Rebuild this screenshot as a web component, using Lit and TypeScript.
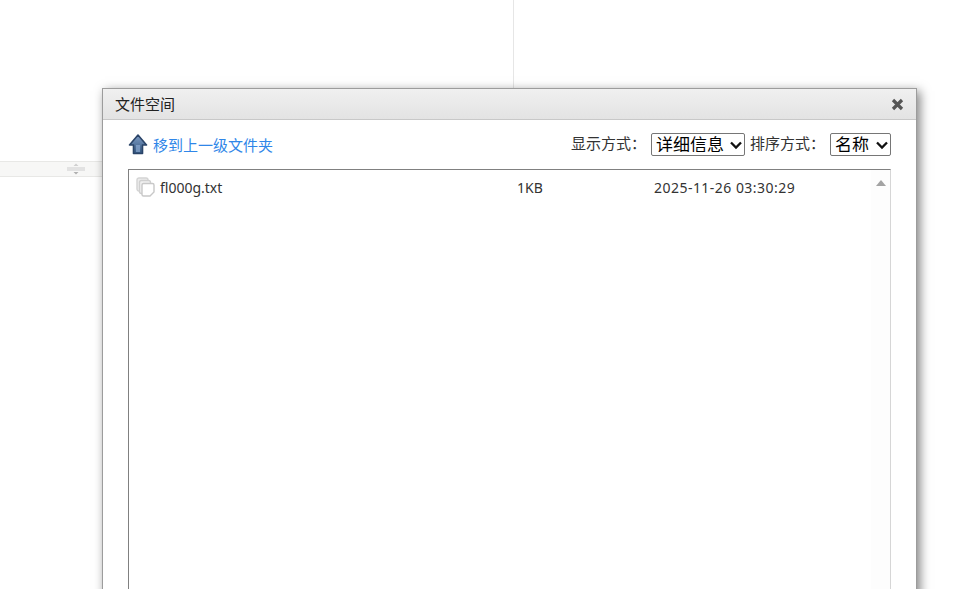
import { LitElement, html, css, unsafeCSS } from "lit";
import { customElement } from "lit/decorators.js";

const chevron = unsafeCSS(
  "data:image/svg+xml," +
    encodeURIComponent(
      '<svg xmlns="http://www.w3.org/2000/svg" width="14" height="10" viewBox="0 0 14 10"><path d="M2 2.500 7 7.500 12 2.500" fill="none" stroke="#111" stroke-width="2.300"/></svg>'
    )
);

@customElement("app-root")
export class AppRoot extends LitElement {
  static styles = css`
    :host {
      display: block;
      position: relative;
      width: 956px;
      height: 589px;
      overflow: hidden;
      background: #fff;
      font-family: "Noto Sans CJK SC", "Open Sans", sans-serif;
      color: #333;
    }
    .divider-line {
      width: 1px;
      height: 161px;
      margin-left: 513px;
      background: #e6e6e6;
    }
    .band {
      width: 447px;
      height: 14px;
      background: #f7f7f6;
      border-top: 1px solid #e8e8e6;
      border-bottom: 1px solid #e8e8e6;
      display: flex;
      align-items: center;
      padding-left: 66px;
    }
    .dialog {
      position: absolute;
      left: 102px;
      top: 88px;
      width: 813px;
      height: 540px;
      background: #fff;
      border: 1px solid #9c9c9c;
      box-shadow: 3px 3px 10px rgba(0, 0, 0, 0.5);
      display: flex;
      flex-direction: column;
    }
    .title {
      height: 30px;
      flex: none;
      display: flex;
      align-items: center;
      justify-content: space-between;
      padding: 0 12px;
      background: linear-gradient(#f0f0f0, #e3e3e3);
      border-bottom: 1px solid #c8c8c8;
      font-size: 15px;
      color: #222;
    }
    .title span { padding-bottom: 2px; }
    .close { display: block; }
    .body {
      flex: 1;
      display: flex;
      flex-direction: column;
      padding: 0 25px;
    }
    .toolbar {
      height: 49px;
      flex: none;
      display: flex;
      align-items: center;
      gap: 5px;
      font-size: 15px;
    }
    .up {
      display: flex;
      align-items: center;
      gap: 5px;
      color: #2f86e8;
      font-size: 15px;
      text-decoration: none;
      margin-right: auto;
    }
    .label { line-height: 20px; padding-bottom: 3px; }
    select {
      appearance: none;
      -webkit-appearance: none;
      font-family: "Noto Sans CJK SC", sans-serif;
      font-size: 17px;
      height: 23px;
      padding: 0 0 2px 4px;
      box-sizing: border-box;
      color: #000;
      border: 1px solid #767676;
      border-radius: 2px;
      background: #fff url("${chevron}") no-repeat right 1px center;
      line-height: 1;
    }
    .s1 { width: 94px; }
    .s2 { width: 61px; }
    .list {
      flex: 1;
      border: 1px solid #808080;
      border-right-color: #d6d6d6;
      border-bottom: 0;
      display: flex;
    }
    .rows { flex: 1; }
    .row {
      height: 36px;
      display: grid;
      grid-template-columns: 381px 137px 1fr;
      align-items: center;
      font-size: 14px;
      padding: 0 0 2px 7px;
      box-sizing: border-box;
      font-family: "Noto Sans", "Noto Sans CJK SC", sans-serif;
      color: #333;
    }
    .row > * { white-space: nowrap; }
    .name { display: flex; align-items: center; gap: 5px; }
    .date { letter-spacing: 0.47px; }
    .bar {
      width: 19px;
      flex: none;
      background: #fdfdfd;
      display: flex;
      justify-content: center;
      padding-top: 10px;
      box-sizing: border-box;
    }
    .arrow {
      width: 0;
      height: 0;
      border-left: 5px solid transparent;
      border-right: 5px solid transparent;
      border-bottom: 6px solid #a3a3a3;
    }
  `;

  render() {
    return html`
      <div class="divider-line"></div>
      <div class="band">
        <svg width="20" height="15" viewBox="0 0 20 15">
          <path d="M7.500 4 10 1.500 12.500 4Z" fill="#d0d0d0"/>
          <rect x="1" y="5" width="18" height="4" fill="#e2e2e2"/>
          <path d="M7.500 10 12.500 10 10 12.500Z" fill="#b0b0b0"/>
        </svg>
      </div>
      <div class="dialog">
        <div class="title">
          <span>文件空间</span>
          <svg class="close" width="13" height="13" viewBox="0 0 13 13">
            <path d="M2 2 11 11M11 2 2 11" stroke="#555" stroke-width="3.200"/>
          </svg>
        </div>
        <div class="body">
          <div class="toolbar">
            <a class="up">
              <svg width="20" height="21" viewBox="0 0 20 21">
                <defs>
                  <linearGradient id="g" x1="0" y1="0" x2="0" y2="1">
                    <stop offset="0" stop-color="#7f9dc6"/>
                    <stop offset="1" stop-color="#33567f"/>
                  </linearGradient>
                </defs>
                <path d="M10 1 18.500 11H14.500V19.500H5.500V11H1.500Z" fill="url(#g)" stroke="#2a4468" stroke-width="1.600" stroke-linejoin="round"/>
                <path d="M8 11H12V18H8Z" fill="#8aa8d0" opacity="0.7"/>
              </svg>
              移到上一级文件夹
            </a>
            <span class="label">显示方式：</span>
            <select class="s1"><option>详细信息</option></select>
            <span class="label">排序方式：</span>
            <select class="s2"><option>名称</option></select>
          </div>
          <div class="list">
            <div class="rows">
              <div class="row">
                <div class="name">
                  <svg width="19" height="20" viewBox="0 0 19 20">
                    <rect x="1" y="1" width="11" height="13" rx="2" fill="#ececec" stroke="#d4d4d4" stroke-width="1.400"/>
                    <rect x="3.500" y="3.500" width="11" height="13" rx="2" fill="#f0f0f0" stroke="#d0d0d0" stroke-width="1.400"/>
                    <path d="M7.500 6.500H16.500a1.500 1.500 0 0 1 1.500 1.500V15L14 19H7.500a1.500 1.500 0 0 1-1.500-1.500V8a1.500 1.500 0 0 1 1.500-1.500Z" fill="#fff" stroke="#c8c8c8" stroke-width="1.400"/>
                  </svg>
                  <span>fl000g.txt</span>
                </div>
                <span>1KB</span>
                <span class="date">2025-11-26 03:30:29</span>
              </div>
            </div>
            <div class="bar"><div class="arrow"></div></div>
          </div>
        </div>
      </div>
    `;
  }
}
